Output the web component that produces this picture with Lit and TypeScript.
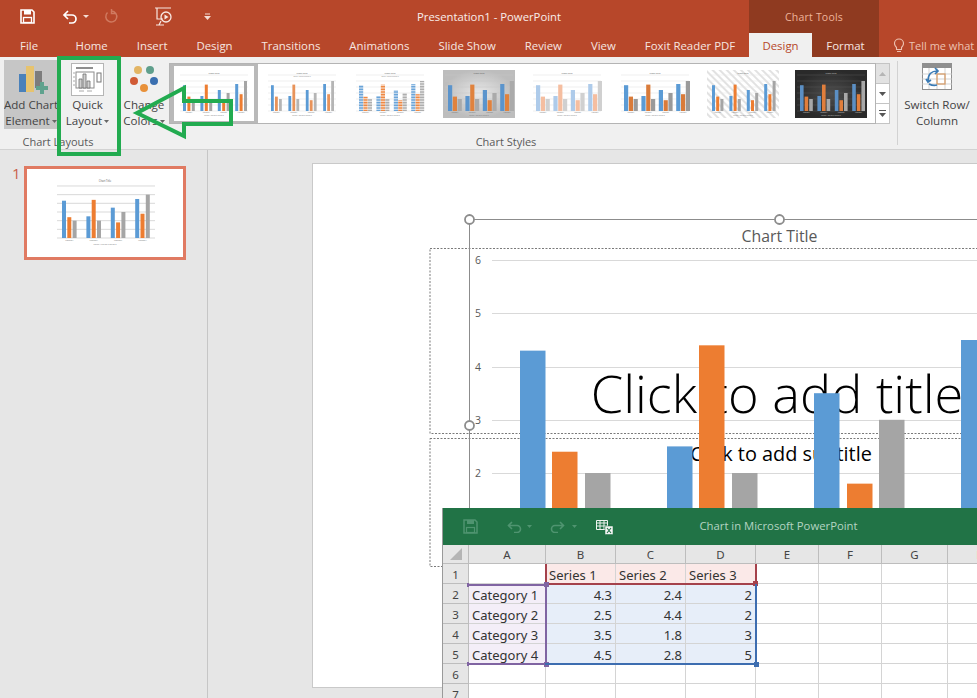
import { LitElement, html, css, svg } from "lit";
import { customElement } from "lit/decorators.js";

const SERIES = [
  [4.3, 2.5, 3.5, 4.5],
  [2.4, 4.4, 1.8, 2.8],
  [2, 2, 3, 5],
];
const BLUE = "#5b9bd5", ORANGE = "#ed7d31", GRAY = "#a5a5a5";

interface Mini {
  x0: number; step: number; barW: number; off: number; base: number; unit: number;
  gx0: number; gx1: number; colors: string[]; grid?: string; text?: string;
  title?: number; fs?: number; extra?: any; sub?: boolean; legendY?: number; gw?: number;
}

function mini(o: Mini, w: number, h: number) {
  const lines = [0, 1, 2, 3, 4, 5, 6];
  const cats = [0, 1, 2, 3];
  const fs = o.fs ?? 1.7;
  return html`<svg class="mini" width=${w} height=${h} viewBox="0 0 ${w} ${h}">
    ${o.extra ?? ""}
    ${lines.map((l) => svg`<line x1=${o.gx0} x2=${o.gx1} y1=${o.base - l * o.unit} y2=${o.base - l * o.unit} stroke=${o.grid ?? "#dcdcdc"} stroke-width=${o.gw ?? 0.5}></line>`)}
    ${SERIES.map((s, si) => cats.map((c) => svg`<rect x=${o.x0 + c * o.step + si * o.off} y=${o.base - s[c] * o.unit} width=${o.barW} height=${s[c] * o.unit} fill=${o.colors[si]}></rect>`))}
    <text x=${w / 2} y=${o.title ?? 3.5} font-size=${fs + 0.6} text-anchor="middle" fill=${o.text ?? "#595959"}>Chart Title</text>
    ${o.sub ? svg`<text x=${w / 2} y=${(o.title ?? 3.5) + 3} font-size=${fs - 0.2} text-anchor="middle" fill=${o.text ?? "#777"}>Series 1 Series 2 Series 3</text>` : ""}
    ${cats.map((c) => svg`<text x=${o.x0 + c * o.step + o.off + o.barW / 2} y=${o.base + fs + 0.6} font-size=${fs} text-anchor="middle" fill=${o.text ?? "#777"}>Category</text>`)}
    <text x=${w / 2} y=${o.legendY ?? o.base + 2 * fs + 1.6} font-size=${fs} text-anchor="middle" fill=${o.text ?? "#777"}>Series 1 Series 2 Series 3</text>
  </svg>`;
}

const BASE = { x0: 5, step: 17.4, barW: 3.6, off: 4.6, base: 41, unit: 6, gx0: 2, gx1: 70 };
const hatchH = svg`<defs>
  <pattern id="hb" width="2" height="1.6" patternUnits="userSpaceOnUse"><rect width="2" height="1" fill="#5b9bd5"></rect></pattern>
  <pattern id="ho" width="2" height="1.6" patternUnits="userSpaceOnUse"><rect width="2" height="1" fill="#ed7d31"></rect></pattern>
  <pattern id="hg" width="2" height="1.6" patternUnits="userSpaceOnUse"><rect width="2" height="1" fill="#a5a5a5"></rect></pattern>
</defs>`;
const hatchD = svg`<defs>
  <pattern id="dg" width="5" height="5" patternUnits="userSpaceOnUse" patternTransform="rotate(45)"><rect width="5" height="2" fill="#e2e2e2"></rect></pattern>
</defs><rect width="72" height="48" fill="url(#dg)"></rect>`;
const softBg = svg`<defs><radialGradient id="sb"><stop offset="0" stop-color="#e8e8e8"></stop><stop offset="1" stop-color="#bdbdbd"></stop></radialGradient></defs><rect width="72" height="48" fill="url(#sb)"></rect>`;
const darkBg = svg`<defs><radialGradient id="db"><stop offset="0" stop-color="#4d4d4d"></stop><stop offset="1" stop-color="#2a2a2a"></stop></radialGradient></defs><rect width="72" height="48" fill="url(#db)"></rect>`;

const STYLES: Partial<Mini>[] = [
  { barW: 3, off: 4.4 },
  { sub: true, colors: [BLUE, "#e8935a", "#b5b5b5"], barW: 2.8, off: 4 },
  { extra: hatchH, colors: ["url(#hb)", "url(#ho)", "url(#hg)"], sub: true, barW: 4.2, off: 4.4 },
  { extra: softBg, grid: "#c4c4c4", colors: ["#5b94cc", "#e0823d", "#aaaaaa"], barW: 4.2, off: 4.8 },
  { colors: ["#aecbea", "#f5bea0", "#d0d0d0"], barW: 4.2, off: 4.8 },
  { colors: [BLUE, "#d97b3a", "#9a9a9a"], barW: 4.2, off: 4.8 },
  { extra: hatchD, colors: [BLUE, ORANGE, GRAY], barW: 3, off: 4.2, grid: "#e5e5e5" },
  { extra: darkBg, colors: ["#5b8fc4", "#e07e3c", "#a8a8a8"], grid: "#555", text: "#ccc", barW: 3.6, off: 4.6 },
];

const Caret = html`<svg class="caret" width="5" height="3" viewBox="0 0 5 3"><path d="M0 0h5L2.500 3z" fill="#666"></path></svg>`;

@customElement("app-root")
export class AppRoot extends LitElement {
  static styles = css`
    :host { display: block; width: 977px; height: 698px; overflow: hidden; background: #e6e6e6;
      font-family: "Open Sans", "Noto Sans", sans-serif; font-size: 12px; color: #444; }
    .app { display: flex; flex-direction: column; height: 698px; }
    header { display: flex; height: 57px; background: #b7472a; color: #f6e6e0; flex: none; }
    .hmain { width: 749px; display: flex; flex-direction: column; flex: none; }
    .qat { height: 33px; display: flex; align-items: center; position: relative; }
    .qat svg { position: relative; flex: none; }
    .title { margin-left: auto; padding-right: 188px; color: #f9eeea; font-size: 11.300px; white-space: nowrap; }
    .tabs { height: 24px; display: flex; align-items: center; white-space: nowrap; font-size: 11.400px; }
    .tab { padding: 0 14.500px; }
    .tab.file { padding: 0 23px 0 20px; }
    .ctx { width: 130px; background: #8f3a20; display: flex; flex-direction: column; flex: none; }
    .ctx-label { height: 33px; display: flex; align-items: center; justify-content: center; color: #eeb49b; font-size: 10.500px; letter-spacing: 0.2px; }
    .ctx-tabs { height: 24px; display: flex; align-items: stretch; font-size: 11.400px; }
    .ctx-tab { display: flex; align-items: center; justify-content: center; }
    .ctx-tab.on { width: 63px; background: #f0f0f0; color: #b7472a; }
    .ctx-tab.off { flex: 1; color: #f6e6e0; }
    .tell { flex: 1; padding-top: 33px; box-sizing: border-box; min-width: 0; }
    .tell div { height: 24px; display: flex; align-items: center; gap: 5px; padding-left: 15px; color: #edc2b1; white-space: nowrap; font-size: 11px; }
    .tell svg { flex: none; }

    .ribbon { height: 93px; flex: none; background: #f0f0f0; border-bottom: 1px solid #d2d2d2; box-sizing: border-box; display: flex; }
    .group { display: flex; flex-direction: column; flex: none; position: relative; }
    .group-body { height: 76px; display: flex; }
    .group-label { text-align: center; font-size: 11px; color: #5a5a5a; line-height: 18px; height: 16px; }
    .big { display: flex; flex-direction: column; align-items: center; padding-top: 3px; box-sizing: border-box; height: 69px; margin-top: 3px; line-height: 16px; font-size: 11.600px; white-space: nowrap; color: #444; overflow: hidden; }
    .big .ic { height: 34px; display: flex; align-items: flex-start; flex: none; }
    .big span { display: block; text-align: center; }
    .caret { vertical-align: middle; margin-left: 2px; }
    .layouts { width: 166px; padding-left: 4px; box-sizing: border-box; }
    .add { width: 54px; background: #c6c6c6; }
    .quick { width: 55px; margin-left: 2px; }
    .colors { width: 44px; margin-left: 7px; }
    .styles { width: 725px; }
    .gallery-wrap { display: flex; margin: 6px 0 0 3px; height: 61px; }
    .gallery { width: 707px; height: 61px; box-sizing: border-box; background: #fff; border: 1px solid #b4b4b4; display: flex; align-items: center; }
    .cell { width: 88.200px; height: 59px; display: flex; align-items: center; justify-content: center; flex: none; box-sizing: border-box; }
    .cell.sel { border: 3px solid #b9b9b9; border-width: 2px 4px; }
    .mini { font-family: "Open Sans", sans-serif; display: block; }
    .scroll { width: 14px; display: flex; flex-direction: column; }
    .scroll div { flex: 1; border: 1px solid #c4c4c4; border-left: none; display: flex; align-items: center; justify-content: center; background: #fff; margin-top: -1px; }
    .scroll div:first-child { background: #e2e2e2; margin-top: 0; }
    .sep { width: 1px; background: #d2d2d2; margin: 4px 0; flex: none; }
    .switch { width: 78px; }

    main { flex: 1; display: flex; min-height: 0; }
    aside { width: 195px; flex: none; border-right: 1px solid #c6c6c6; display: flex; align-items: flex-start; padding: 16px 0 0 12px; }
    .num { color: #c9604a; font-size: 15px; width: 12px; line-height: 15px; }
    .thumb { border: 3px solid #e07a62; background: #fff; width: 156px; height: 88px; flex: none; }
    .canvas { flex: 1; position: relative; overflow: hidden; padding: 13px 0 0 104px; min-width: 0; }
    .slide { width: 934px; height: 525px; background: #fff; border: 1px solid #c9c9c9; box-sizing: border-box; position: relative; }
    .slide > svg { position: absolute; left: -1px; top: -1px; font-family: "Open Sans", sans-serif; }
    .sheet { position: absolute; left: 129px; top: 344px; width: 540px; height: 190px; background: #fff; border-left: 1px solid #9a9a9a; }
    .sheet-bar { height: 37px; background: #217346; display: flex; align-items: center; position: relative; }
    .sheet-bar svg { flex: none; }
    .sheet-title { position: absolute; left: 0; width: 671px; text-align: center; color: #b4d4c2; font-size: 11.300px; margin-top: -2px; }
    .grid { display: grid; grid-template-columns: 26px 77px 70px 70px 70px 63px 63px 66px 66px; grid-template-rows: 19px repeat(7, 20px);
      font-family: "Noto Sans", sans-serif; font-size: 13px; color: #333; position: relative; }
    .c { border-right: 1px solid #d4d4d4; border-bottom: 1px solid #d4d4d4; box-sizing: border-box; display: flex; align-items: center; padding: 3px 3px 0; white-space: nowrap; overflow: hidden; line-height: 1; }
    .h { background: #e6e6e6; border-color: #bdbdbd; justify-content: center; font-size: 11.500px; color: #444; padding: 2px 0 0; }
    .corner { padding: 0; }
    .r { justify-content: flex-end; }
    .pink { background: #fbe9e8; }
    .lav { background: #f4eef8; }
    .ice { background: #e7eef9; }
    .rng { box-sizing: border-box; position: absolute; inset: 0 -1px -1px -1px; pointer-events: none; }
    .rng i { position: absolute; width: 5px; height: 5px; }
    .rs { grid-area: 2 / 3 / 3 / 6; border: 2px solid #a5414b; border-top: none; }
    .rc { grid-area: 3 / 2 / 7 / 3; border-top: 2px solid #8064a2; border-bottom: 2px solid #8064a2; border-right: 2px solid #8064a2; }
    .rv { grid-area: 3 / 3 / 7 / 6; border-right: 2px solid #3d6db0; border-bottom: 2px solid #3d6db0; }
  `;

  private qat() {
    return html`<div class="qat">
      <svg style="margin-left:20px" width="15" height="15" viewBox="0 0 15 15"><path d="M1 1h11l2 2v11H1z" fill="none" stroke="#fff" stroke-width="1.600"></path><rect x="4" y="1" width="7" height="4.500" fill="#fff"></rect><rect x="3.500" y="8.500" width="8" height="5" fill="none" stroke="#fff" stroke-width="1.300"></rect></svg>
      <svg style="margin-left:27px" width="16" height="14" viewBox="0 0 16 14"><path d="M6 1L2 5l4 4M2 5h8a4 4 0 0 1 4 4v0a4 4 0 0 1-4 4H7" fill="none" stroke="#fff" stroke-width="1.700"></path></svg>
      <svg style="margin-left:5px" width="6" height="3" viewBox="0 0 6 3"><path d="M0 0h6L3 3z" fill="#f4dcd3"></path></svg>
      <svg style="margin-left:15px" width="15" height="15" viewBox="0 0 15 15"><path d="M3.500 3.500a5.500 5.500 0 1 0 4-1.500M7.500 0v4.500H12" fill="none" stroke="#d07a60" stroke-width="1.500"></path></svg>
      <svg style="margin-left:36px" width="18" height="19" viewBox="0 0 18 19"><path d="M0 1h16M2 1v11h6M6 14l-2 4M1 18h8" fill="none" stroke="#f8e8e2" stroke-width="1.200"></path><circle cx="11" cy="10" r="5" fill="none" stroke="#f8e8e2" stroke-width="1.300"></circle><path d="M9.500 7.500L13.500 10l-4 2.500z" fill="#f8e8e2"></path></svg>
      <svg style="margin-left:31px" width="7" height="7" viewBox="0 0 7 7"><path d="M1 1h5" stroke="#f4dcd3" stroke-width="1"></path><path d="M0 3h7L3.500 7z" fill="#f4dcd3"></path></svg>
      <div class="title">Presentation1 - PowerPoint</div>
    </div>`;
  }

  private ribbon() {
    return html`<section class="ribbon">
      <div class="group layouts">
        <div class="group-body">
          <div class="big add"><div class="ic"><svg width="40" height="33" viewBox="0 0 40 33"><rect x="8" y="11" width="7" height="18" fill="#4a81ba"></rect><rect x="15" y="3" width="8" height="26" fill="#e6c36f"></rect><rect x="24" y="8" width="7" height="17" fill="#7c7c7c"></rect><path d="M28 25h4v-4h4v4h4v4h-4v4h-4v-4h-4z" transform="translate(-3,-2)" fill="#5fa28e"></path></svg></div><span>Add Chart</span><span>Element${Caret}</span></div>
          <div class="big quick"><div class="ic"><svg width="33" height="33" viewBox="0 0 33 33"><rect x="0.500" y="0.500" width="32" height="32" fill="#fff" stroke="#b5b5b5"></rect><rect x="5" y="4" width="17" height="2" fill="#8f8f8f"></rect><path d="M2 10h2M2 14h2M2 18h2M2 22h2" stroke="#aaa"></path><rect x="5" y="9" width="18" height="16" fill="none" stroke="#8c8c8c"></rect><path d="M8 25V16h3v9zM12 25V11h3v14zM16 25v-7h3v7z" fill="#cfcfcf" stroke="#6f6f6f" stroke-width="0.800"></path><rect x="26" y="10" width="4" height="9" fill="#fff" stroke="#777"></rect><path d="M8 28h5M16 28h5" stroke="#aaa"></path></svg></div><span>Quick</span><span>Layout${Caret}</span></div>
          <div class="big colors"><div class="ic"><svg width="30" height="32" viewBox="0 0 30 32"><circle cx="9" cy="7" r="4" fill="#e3b565"></circle><circle cx="21" cy="7" r="4" fill="#5f9f8c"></circle><circle cx="5" cy="18" r="4" fill="#d05a35"></circle><circle cx="25" cy="18" r="4" fill="#3a6fb0"></circle><circle cx="15" cy="25" r="4" fill="#e8913a"></circle></svg></div><span>Change</span><span>Colors${Caret}</span></div>
        </div>
        <div class="group-label" style="width:108px">Chart Layouts</div>
      </div>
      <div class="group styles">
        <div class="group-body"><div class="gallery-wrap">
          <div class="gallery">
            ${STYLES.map((s, i) => html`<div class="cell ${i === 0 ? "sel" : ""}">${mini({ ...BASE, colors: [BLUE, ORANGE, GRAY], ...s } as Mini, 72, 48)}</div>`)}
          </div>
          <div class="scroll">
            <div><svg width="7" height="4" viewBox="0 0 7 4"><path d="M0 4h7L3.500 0z" fill="#b5b5b5"></path></svg></div>
            <div><svg width="7" height="4" viewBox="0 0 7 4"><path d="M0 0h7L3.500 4z" fill="#555"></path></svg></div>
            <div><svg width="7" height="7" viewBox="0 0 7 7"><path d="M0 0.500h7" stroke="#555"></path><path d="M0 3h7L3.500 7z" fill="#555"></path></svg></div>
          </div>
        </div></div>
        <div class="group-label" style="width:680px">Chart Styles</div>
      </div>
      <div class="sep" style="margin-left:6px"></div>
      <div class="group switch">
        <div class="group-body"><div class="big" style="width:78px"><div class="ic"><svg width="30" height="27" viewBox="0 0 30 27"><rect x="0.500" y="0.500" width="29" height="26" fill="#fff" stroke="#8f8f8f"></rect><rect width="30" height="5" fill="#8f8f8f"></rect><path d="M0 11h30M0 16h30M0 21h30M7 5v21M15 5v21M23 5v21" stroke="#c8c8c8" stroke-width="0.800"></path><rect x="15" y="11" width="8" height="10" fill="none" stroke="#d89a63" stroke-width="1.200"></rect><path d="M6 18c0-7 4-10 9-10M13 5l3 3-3 3M4 16l2 3 3-2M15 22c-3 1-6 0-8-1" fill="none" stroke="#3b7bb5" stroke-width="1.700"></path></svg></div><span>Switch Row/</span><span>Column</span></div></div>
      </div>
    </section>`;
  }

  private chart() {
    const gridYs = [[6, 260], [5, 313], [4, 367], [3, 420], [2, 473]] as const;
    const xs = [[520, 552, 585], [667, 699, 732], [814, 847, 879], [961, 994, 1026]];
    const yOf = (v: number) => 473 + (2 - v) * 53.2;
    const cols = [BLUE, ORANGE, GRAY];
    const ring = (cx: number, cy: number) => svg`<circle cx=${cx} cy=${cy} r="4.500" fill="#fff" stroke="#8c8c8c" stroke-width="1.800"></circle>`;
    return html`<svg width="934" height="525" viewBox="312 163 934 525">
      <rect x="430" y="248.500" width="800" height="185" fill="none" stroke="#7a7a7a" stroke-width="1" stroke-dasharray="2 1.500"></rect>
      <rect x="430" y="438.500" width="800" height="128" fill="none" stroke="#7a7a7a" stroke-width="1" stroke-dasharray="2 1.500"></rect>
      <text x="777" y="413" font-size="52.300" font-weight="300" text-anchor="middle" fill="#000">Click to add title</text>
      <text x="781" y="461" font-size="19.900" text-anchor="middle" fill="#000">Click to add subtitle</text>
      ${gridYs.map(([n, y]) => svg`
        <line x1="492" x2="977" y1=${y + 0.5} y2=${y + 0.5} stroke="#d9d9d9"></line>
        <text x="478" y=${y + 4} font-size="10.500" text-anchor="middle" fill="#595959">${n}</text>`)}
      ${xs.map((g, gi) => g.map((x, si) => svg`<rect x=${x} y=${yOf(SERIES[si][gi])} width="25.500" height=${510 - yOf(SERIES[si][gi])} fill=${cols[si]}></rect>`))}
      <path d="M1300 219.500H469.500V510" fill="none" stroke="#8c8c8c"></path>
      ${ring(469.5, 219.5)}${ring(779.5, 219.5)}${ring(469.5, 425.5)}
      <text x="779.500" y="241.500" font-size="15.800" text-anchor="middle" fill="#595959">Chart Title</text>
    </svg>`;
  }

  private sheet() {
    const colsH = ["", "A", "B", "C", "D", "E", "F", "G", "H"];
    const rows: [string, string, string, string][] = [
      ["", "Series 1", "Series 2", "Series 3"],
      ["Category 1", "4.3", "2.4", "2"],
      ["Category 2", "2.5", "4.4", "2"],
      ["Category 3", "3.5", "1.8", "3"],
      ["Category 4", "4.5", "2.8", "5"],
      ["", "", "", ""],
      ["", "", "", ""],
    ];
    return html`<div class="sheet">
      <div class="sheet-bar">
        <svg style="margin-left:20px" width="15" height="15" viewBox="0 0 15 15"><path d="M1 1h11l2 2v11H1z" fill="none" stroke="#4f9470" stroke-width="1.500"></path><rect x="4" y="1" width="7" height="4" fill="#4f9470"></rect><rect x="3.500" y="8.500" width="8" height="5" fill="none" stroke="#4f9470" stroke-width="1.200"></rect></svg>
        <svg style="margin-left:29px" width="15" height="12" viewBox="0 0 15 12"><path d="M5 1L1.500 4.500 5 8M2 4.500h8a3 3 0 0 1 0 7H7" fill="none" stroke="#4f9470" stroke-width="1.600"></path></svg>
        <svg style="margin-left:5px" width="5" height="3" viewBox="0 0 5 3"><path d="M0 0h5L2.500 3z" fill="#4f9470"></path></svg>
        <svg style="margin-left:18px" width="15" height="12" viewBox="0 0 15 12"><path d="M10 1l3.500 3.500L10 8M13 4.500H5a3 3 0 0 0 0 7h3" fill="none" stroke="#4f9470" stroke-width="1.600"></path></svg>
        <svg style="margin-left:7px" width="5" height="3" viewBox="0 0 5 3"><path d="M0 0h5L2.500 3z" fill="#4f9470"></path></svg>
        <svg style="margin-left:19px" width="18" height="16" viewBox="0 0 18 16"><path d="M0.500 1.500h11v9h-11zM0.500 4h11M0.500 7h11M4 1.500v9M8 1.500v9" fill="none" stroke="#eef5f0" stroke-width="1"></path><rect x="9" y="7" width="8" height="8.500" fill="#f5f5f5" stroke="#217346" stroke-width="0.500"></rect><path d="M11 9l4 5M15 9l-4 5" stroke="#217346" stroke-width="1.100"></path></svg>
        <div class="sheet-title">Chart in Microsoft PowerPoint</div>
      </div>
      <div class="grid">
        ${colsH.map((h, i) => html`<div class="c h ${i === 0 ? "corner" : ""}">${i === 0 ? html`<svg width="14" height="14" viewBox="0 0 14 14"><path d="M13 1v12H1z" fill="#b5b5b5"></path></svg>` : h}</div>`)}
        ${rows.map((r, ri) => html`
          <div class="c h">${ri + 1}</div>
          ${r.map((v, ci) => {
            const tint = ri === 0 && ci > 0 ? "pink" : ri > 0 && ri < 5 ? (ci === 0 ? "lav" : "ice") : "";
            return html`<div class="c ${tint} ${ri > 0 && ci > 0 ? "r" : ""}">${v}</div>`;
          })}
          ${[0, 1, 2, 3].map(() => html`<div class="c"></div>`)}
        `)}
        <div class="rng rs">
          <i style="left:-2px;top:0;height:3px;width:2px;background:#a5414b"></i>
          <i style="right:-2px;top:0;height:3px;width:2px;background:#a5414b"></i>
          <i style="right:-3px;bottom:-3px;background:#a5414b"></i>
        </div>
        <div class="rng rc">
          <i style="left:-1px;top:-3px;width:2px;height:4px;background:#8064a2"></i>
          <i style="left:-1px;bottom:-3px;width:2px;height:4px;background:#8064a2"></i>
          <i style="right:-4px;top:-4px;background:#8064a2"></i>
          <i style="right:-4px;bottom:-4px;background:#8064a2"></i>
        </div>
        <div class="rng rv"><i style="right:-4px;bottom:-4px;background:#3d6db0"></i></div>
      </div>
    </div>`;
  }

  render() {
    const thumb: Mini = { x0: 35, step: 24.4, barW: 4, off: 5.3, base: 69, unit: 8.67, gx0: 30, gx1: 128, colors: [BLUE, ORANGE, GRAY], title: 13, fs: 2, legendY: 76, gw: 0.8, grid: "#cfcfcf" };
    return html`<div class="app">
      <header>
        <div class="hmain">
          ${this.qat()}
          <div class="tabs">
            <span class="tab file">File</span>
            ${["Home", "Insert", "Design", "Transitions", "Animations", "Slide Show", "Review", "View", "Foxit Reader PDF"].map((t) => html`<span class="tab">${t}</span>`)}
          </div>
        </div>
        <div class="ctx">
          <div class="ctx-label">Chart Tools</div>
          <div class="ctx-tabs"><div class="ctx-tab on">Design</div><div class="ctx-tab off">Format</div></div>
        </div>
        <div class="tell"><div>
          <svg width="10" height="15" viewBox="0 0 10 15"><path d="M2.500 9.500C1 8 .5 7 .5 5.500a4.500 4.500 0 0 1 9 0c0 1.500-.5 2.500-2 4v2h-5zM3 13.500h4" fill="none" stroke="#edc2b1" stroke-width="1.100"></path></svg>
          Tell me what
        </div></div>
      </header>
      ${this.ribbon()}
      <main>
        <aside>
          <div class="num">1</div>
          <div class="thumb">${mini(thumb, 156, 88)}</div>
        </aside>
        <div class="canvas">
          <div class="slide">${this.chart()}${this.sheet()}</div>
        </div>
      </main>
      <svg style="position:absolute;left:0;top:0;pointer-events:none" width="977" height="698">
        <rect x="59" y="58" width="60" height="96" fill="none" stroke="#22ab50" stroke-width="4"></rect>
        <path d="M137 113L184 88V101H231V124H184V136Z" fill="none" stroke="#22ab50" stroke-width="4"></path>
      </svg>
    </div>`;
  }
}
